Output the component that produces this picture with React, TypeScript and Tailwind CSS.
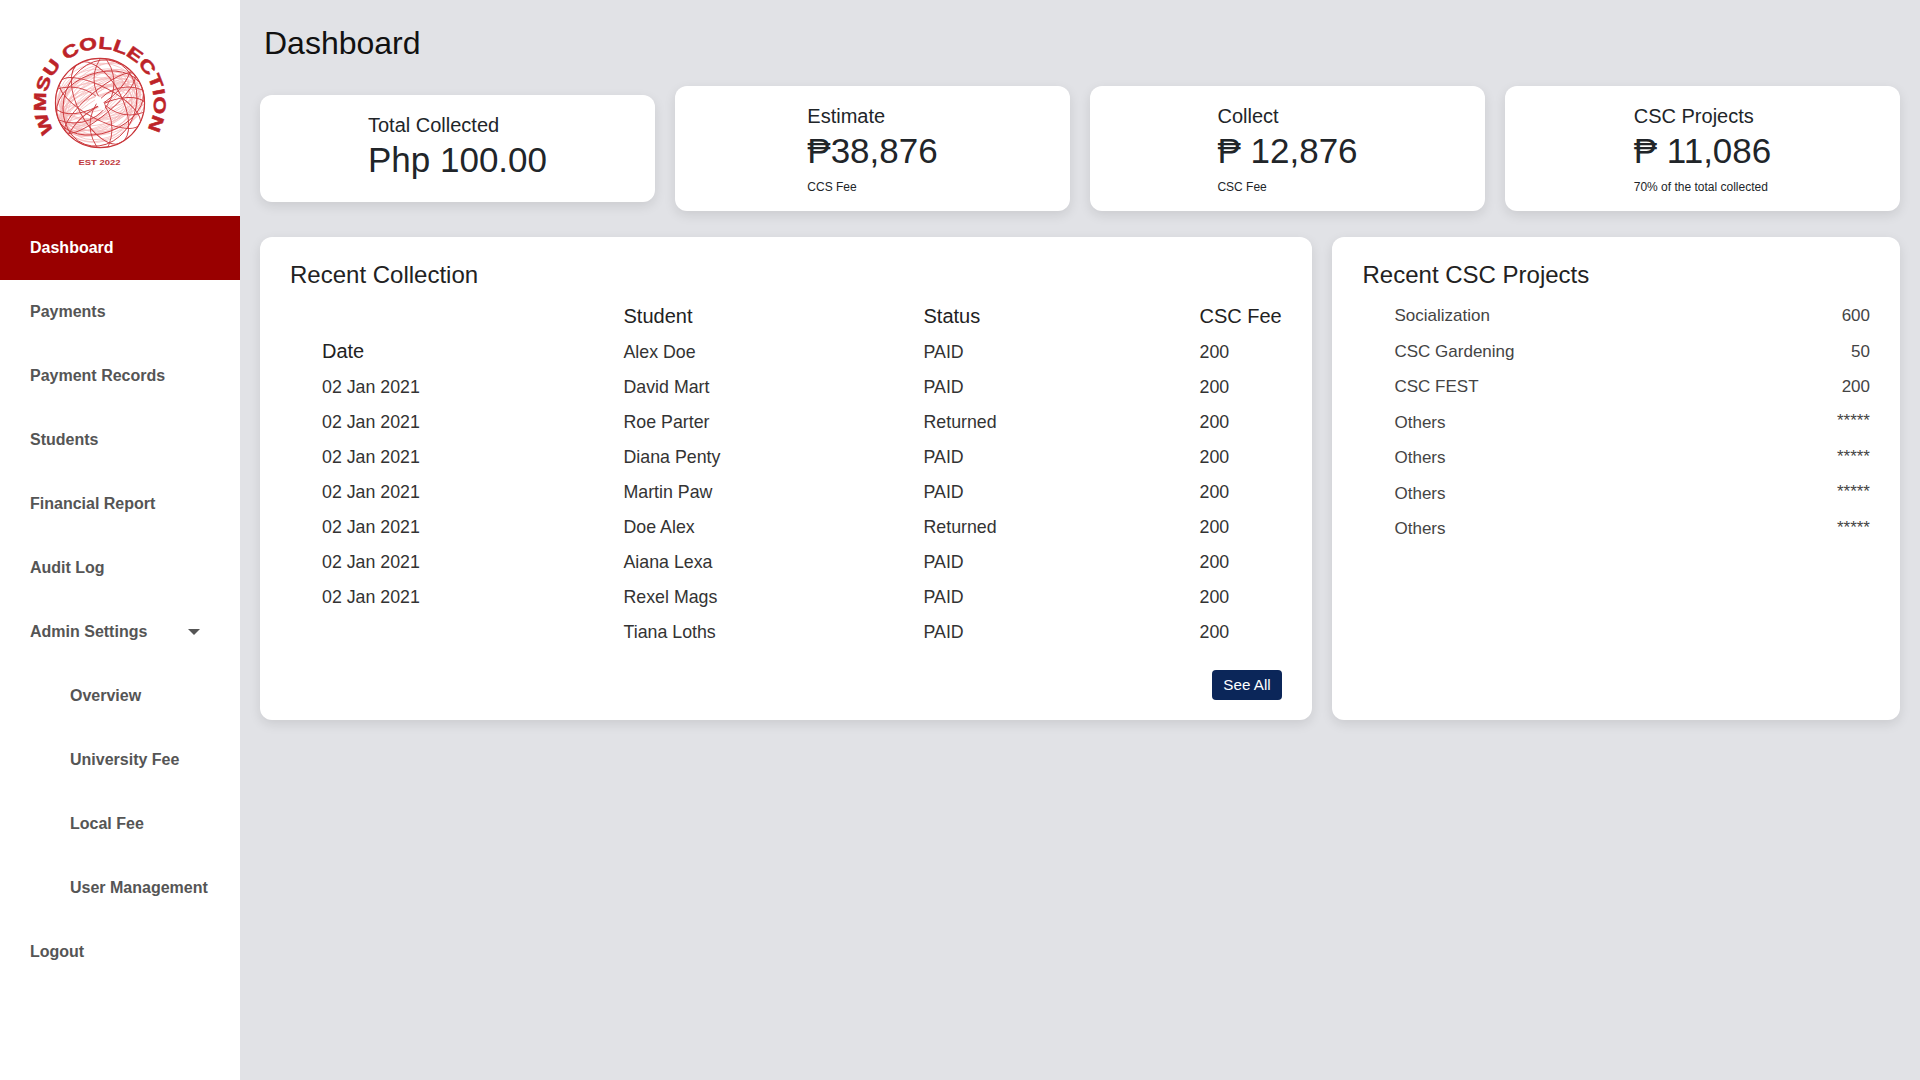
import React from 'react';

const nav = [
    { label: 'Dashboard', active: true },
    { label: 'Payments' },
    { label: 'Payment Records' },
    { label: 'Students' },
    { label: 'Financial Report' },
    { label: 'Audit Log' },
    { label: 'Admin Settings', caret: true },
    { label: 'Overview', sub: true },
    { label: 'University Fee', sub: true },
    { label: 'Local Fee', sub: true },
    { label: 'User Management', sub: true },
    { label: 'Logout' },
];

const dates = Array.from({ length: 7 }, () => '02 Jan 2021');

const rows = [
    ['Alex Doe', 'PAID'],
    ['David Mart', 'PAID'],
    ['Roe Parter', 'Returned'],
    ['Diana Penty', 'PAID'],
    ['Martin Paw', 'PAID'],
    ['Doe Alex', 'Returned'],
    ['Aiana Lexa', 'PAID'],
    ['Rexel Mags', 'PAID'],
    ['Tiana Loths', 'PAID'],
];

const projects = [
    ['Socialization', '600'],
    ['CSC Gardening', '50'],
    ['CSC FEST', '200'],
    ['Others', '*****'],
    ['Others', '*****'],
    ['Others', '*****'],
    ['Others', '*****'],
];

const stats = [
    { title: 'Estimate', value: '₱38,876', note: 'CCS Fee' },
    { title: 'Collect', value: '₱ 12,876', note: 'CSC Fee' },
    { title: 'CSC Projects', value: '₱ 11,086', note: '70% of the total collected' },
];

// rx, ry, rotation, cx, cy of the globe's wire lines
const darkLines = [
    [45, 45, 0, 0, 0],
    [45, 16, 28, 0, 0],
    [45, 30, -20, 0, 0],
    [45, 22, 62, 0, 0],
    [44, 36, 110, 0, 0],
    [45, 12, 140, 0, 0],
    [40, 40, 0, -26, -20],
    [38, 38, 0, 28, 22],
    [36, 36, 0, 30, -24],
    [42, 42, 0, -30, 26],
    [46, 26, -35, 6, -24],
    [46, 24, -30, -6, 26],
];

const lightLines = Array.from({ length: 26 }, (_, i) => [
    38 + (i % 5) * 1.5,
    7 + (i % 13) * 2.4,
    -30 + (i % 7) * 5 - (i % 2) * 15,
    ((i % 5) - 2) * 3,
    ((i % 3) - 1) * 4,
]);

function Logo() {
    return (
        <svg width="160" height="150" viewBox="0 0 160 150" className="block">
            <defs>
                <path id="logoArc" d="M 34.2 106.6 A 54 54 0 1 1 127.2 104.2" />
                <clipPath id="globeClip">
                    <circle cx="0" cy="0" r="45" />
                </clipPath>
            </defs>
            <g fill="none" transform="translate(80 78)" clipPath="url(#globeClip)">
                {lightLines.map((l, i) => (
                    <ellipse
                        key={i}
                        cx={l[3]}
                        cy={l[4]}
                        rx={l[0]}
                        ry={l[1]}
                        stroke="#f5b9ba"
                        strokeWidth="0.7"
                        transform={`rotate(${l[2]})`}
                    />
                ))}
                {darkLines.map((l, i) => (
                    <ellipse
                        key={i}
                        cx={l[3]}
                        cy={l[4]}
                        rx={l[0]}
                        ry={l[1]}
                        stroke="#cd3a3e"
                        strokeWidth="0.9"
                        transform={`rotate(${l[2]})`}
                    />
                ))}
                <ellipse rx="3.5" ry="8" fill="#ffffff" transform="rotate(-30)" />
            </g>
            <circle cx="80" cy="78" r="44.6" fill="none" stroke="#c9373b" strokeWidth="1.1" />
            <text
                fill="#bd2328"
                stroke="#bd2328"
                strokeWidth="0.5"
                fontFamily="Liberation Sans"
                fontWeight="700"
                fontSize="17"
                textLength="227"
                lengthAdjust="spacingAndGlyphs"
            >
                <textPath href="#logoArc">WMSU COLLECTION</textPath>
            </text>
            <text
                x="79.5"
                y="139.5"
                textAnchor="middle"
                fill="#c0393d"
                fontFamily="Liberation Sans"
                fontWeight="700"
                fontSize="6.5"
                textLength="42"
                lengthAdjust="spacingAndGlyphs"
            >
                EST 2022
            </text>
        </svg>
    );
}

function StatCard({ title, value, note }: { title: string; value: string; note: string }) {
    return (
        <div className="h-[125px] bg-white rounded-xl shadow-[0_4px_12px_rgba(0,0,0,0.1)] flex justify-center items-center">
            <div className="text-[#212529]">
                <div className="text-[20px] leading-[24px]">{title}</div>
                <div className="text-[35px] leading-[42px] mt-[2px]">{value}</div>
                <div className="text-[12px] leading-[14px] mt-[8px]">{note}</div>
            </div>
        </div>
    );
}

export default function App() {
    return (
        <div className="flex min-h-screen bg-[#e1e2e6] font-['Liberation_Sans',Arial,sans-serif]">
            <aside className="w-[240px] shrink-0 bg-white">
                <div className="h-[216px] pt-[25px] pl-5">
                    <Logo />
                </div>
                <nav>
                    {nav.map(item => (
                        <div
                            key={item.label}
                            className={
                                'h-16 flex items-center text-[16px] font-bold ' +
                                (item.active ? 'bg-[#990000] text-white ' : 'text-[#555555] ') +
                                (item.sub ? 'pl-[70px]' : 'pl-[30px]')
                            }
                        >
                            {item.label}
                            {item.caret && (
                                <span className="ml-[41px] w-0 h-0 border-x-[6px] border-x-transparent border-t-[6px] border-t-[#555555]" />
                            )}
                        </div>
                    ))}
                </nav>
            </aside>

            <main className="flex-1 px-5">
                <h1 className="pl-[4px] pt-[24px] text-[32px] leading-[38px] text-[#111111]">Dashboard</h1>

                <div className="mt-6 grid grid-cols-4 gap-5 items-center">
                    <div className="h-[107px] bg-white rounded-xl shadow-[0_4px_12px_rgba(0,0,0,0.1)] flex justify-center items-center">
                        <div className="text-[#212529] pb-[2px]">
                            <div className="text-[20px] leading-[23px]">Total Collected</div>
                            <div className="text-[35px] leading-[42px] mt-[2px]">Php 100.00</div>
                        </div>
                    </div>
                    {stats.map(s => (
                        <StatCard key={s.title} {...s} />
                    ))}
                </div>

                <div className="mt-[26px] flex gap-5 items-stretch">
                    <section className="w-[1052px] h-[483px] bg-white rounded-xl shadow-[0_4px_12px_rgba(0,0,0,0.1)] px-[30px] pt-[24px]">
                        <h2 className="text-[24px] leading-[28px] text-[#222222]">Recent Collection</h2>
                        <div className="mt-[8px] flex text-[17.8px] text-[#333333] whitespace-nowrap">
                            <div className="w-[333.5px] pl-[32px] pt-[35px]">
                                <div className="h-[38px] flex items-center text-[20px] text-[#222222]">Date</div>
                                {dates.map((d, i) => (
                                    <div key={i} className="h-[35px] flex items-center">{d}</div>
                                ))}
                            </div>
                            <div className="w-[300px]">
                                <div className="h-[38px] flex items-center text-[20px] text-[#222222]">Student</div>
                                {rows.map(r => (
                                    <div key={r[0]} className="h-[35px] flex items-center">{r[0]}</div>
                                ))}
                            </div>
                            <div className="w-[276px]">
                                <div className="h-[38px] flex items-center text-[20px] text-[#222222]">Status</div>
                                {rows.map(r => (
                                    <div key={r[0]} className="h-[35px] flex items-center">{r[1]}</div>
                                ))}
                            </div>
                            <div className="flex-1">
                                <div className="h-[38px] flex items-center text-[20px] text-[#222222]">CSC Fee</div>
                                {rows.map(r => (
                                    <div key={r[0]} className="h-[35px] flex items-center">200</div>
                                ))}
                            </div>
                        </div>
                        <div className="mt-[20px] flex justify-end">
                            <button className="h-[30px] w-[70px] bg-[#0b2659] text-white text-[15.2px] rounded-[4px]">See All</button>
                        </div>
                    </section>

                    <section className="flex-1 bg-white rounded-xl shadow-[0_4px_12px_rgba(0,0,0,0.1)] pl-[30.5px] pr-[30px] pt-[24px]">
                        <h2 className="text-[24px] leading-[28px] text-[#222222]">Recent CSC Projects</h2>
                        <div className="mt-[9px] pl-8 text-[17px] text-[#444444]">
                            {projects.map((p, i) => (
                                <div key={i} className="h-[35.5px] flex items-center justify-between">
                                    <span>{p[0]}</span>
                                    <span className={p[1] === '*****' ? '-mt-[3px]' : ''}>{p[1]}</span>
                                </div>
                            ))}
                        </div>
                    </section>
                </div>
            </main>
        </div>
    );
}
